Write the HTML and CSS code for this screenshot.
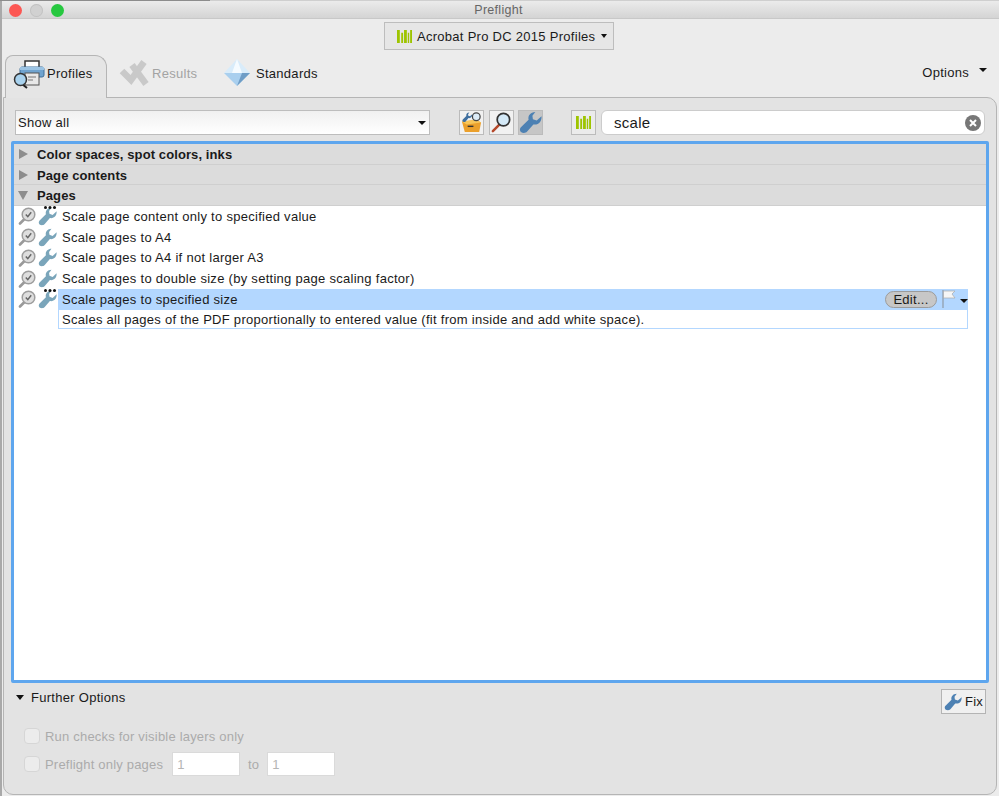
FILE: index.html
```html
<!DOCTYPE html>
<html lang="en">
<head>
<meta charset="utf-8">
<title>Preflight</title>
<link rel="stylesheet" href="styles.css">
</head>
<body>
<svg class="defs" width="0" height="0" aria-hidden="true">
  <defs>
    <symbol id="wrench" viewBox="0 0 24 24">
      <path d="M17 1C12 1 9 5 10 9L2 17C0 19 1 23 5 23C6.500 23 7.500 22.500 8.500 21.500L15 14C20 15 24 11 23.500 5.500L18.500 10L14.500 8.500L14 5Z"/>
    </symbol>
    <symbol id="bars" viewBox="0 0 16 16">
      <path d="M0 1h3v14H0zM4.500 4h2v11h-2zM7.500 1h3v14h-3zM11.500 4h1.500v11h-1.500zM14 1h2v14h-2z" fill="#9ec400"/>
    </symbol>
    <symbol id="lens-check" viewBox="0 0 18 18">
      <path d="M2 16.500l4-4" stroke="#9a9a9a" stroke-width="2.600" stroke-linecap="round"/>
      <circle cx="10.500" cy="7.500" r="6.300" fill="#dedede" stroke="#9d9d9d" stroke-width="1.500"/>
      <path d="M7.800 7.500l2 2.200 3.400-4.400" fill="none" stroke="#666" stroke-width="1.500"/>
    </symbol>
  </defs>
</svg>
<div class="window">
  <header class="titlebar">
    <div class="lights"><i class="light red"></i><i class="light off"></i><i class="light green"></i></div>
    <span class="title">Preflight</span>
  </header>
  <div class="library-row">
    <button class="library"><svg class="bars-small"><use href="#bars"/></svg>Acrobat Pro DC 2015 Profiles<i class="caret lib-caret"></i></button>
  </div>
  <div class="tabs">
    <div class="tab active">
      <svg class="tab-icon printer" viewBox="0 0 32 30">
        <rect x="12" y="2" width="14" height="8" fill="#fff" stroke="#333" stroke-width="1.500"/>
        <rect x="7" y="8" width="24" height="10" rx="2" fill="#6fa3cf" stroke="#3f6f99"/>
        <rect x="7" y="8" width="24" height="3" fill="#9cc4e4"/>
        <rect x="12" y="14" width="14" height="12" fill="#e8e8e8" stroke="#555"/>
        <path d="M15 18h8M15 21h5" stroke="#777"/>
        <path d="M9 25l5 4" stroke="#222" stroke-width="2"/>
        <circle cx="7.500" cy="20.500" r="6" fill="#a8d2ee" stroke="#333" stroke-width="1.500"/>
      </svg>
      <span>Profiles</span>
    </div>
    <div class="tab disabled">
      <svg class="tab-icon results" viewBox="0 0 30 28" fill="none" stroke="#c9c9c9" stroke-width="6.500">
        <path d="M3 12l9 9L25 3"/>
        <path d="M13 6l14 19"/>
      </svg>
      <span>Results</span>
    </div>
    <div class="tab standards">
      <svg class="tab-icon diamond" viewBox="0 0 28 28">
        <path d="M14 0L27 14H1z" fill="#d9ecfa"/>
        <path d="M14 0l-5 14h10z" fill="#f5fbff"/>
        <path d="M1 14h26L14 27z" fill="#a9cfee"/>
        <path d="M19 14h8L14 27z" fill="#6f9dc6"/>
      </svg>
      <span>Standards</span>
    </div>
    <div class="options">Options<i class="caret opt-caret"></i></div>
  </div>
  <main class="panel">
    <div class="toolbar">
      <div class="select">Show all<i class="caret sel-caret"></i></div>
      <div class="icon-group">
        <button class="icon-btn">
          <svg viewBox="0 0 24 24">
            <path d="M2 11l15 -2 5 3-2 10H5z" fill="#eba02c"/>
            <path d="M2 11l15-2 5 3-15 2z" fill="#f7c65a"/>
            <path d="M8 16h6" stroke="#333" stroke-width="1.500"/>
            <use href="#wrench" x="2" y="1" width="11" height="11" fill="#3f6f9f"/>
            <circle cx="17" cy="6" r="4" fill="#dcecf8" stroke="#444" stroke-width="1.300"/>
          </svg>
        </button>
        <button class="icon-btn">
          <svg viewBox="0 0 24 24">
            <path d="M3 21l7-7" stroke="#b5482a" stroke-width="2.600" stroke-linecap="round"/>
            <circle cx="14" cy="9" r="6.500" fill="#d4e9f7" stroke="#333" stroke-width="1.800"/>
          </svg>
        </button>
        <button class="icon-btn pressed"><svg class="blue"><use href="#wrench"/></svg></button>
      </div>
      <button class="icon-btn bars-btn"><svg><use href="#bars"/></svg></button>
      <div class="search">
        <span>scale</span>
        <svg class="clear" viewBox="0 0 16 16">
          <circle cx="8" cy="8" r="8" fill="#777"/>
          <path d="M5 5l6 6M11 5l-6 6" stroke="#fff" stroke-width="2"/>
        </svg>
      </div>
    </div>
    <section class="list">
      <div class="group"><i class="tri right"></i>Color spaces, spot colors, inks</div>
      <div class="group"><i class="tri right"></i>Page contents</div>
      <div class="group"><i class="tri down"></i>Pages</div>
      <div class="row">
        <div class="row-icons"><svg class="lens"><use href="#lens-check"/></svg><span class="wr-wrap dots"><svg class="wr"><use href="#wrench"/></svg></span></div>
        <span class="row-text">Scale page content only to specified value</span>
      </div>
      <div class="row">
        <div class="row-icons"><svg class="lens"><use href="#lens-check"/></svg><span class="wr-wrap"><svg class="wr"><use href="#wrench"/></svg></span></div>
        <span class="row-text">Scale pages to A4</span>
      </div>
      <div class="row">
        <div class="row-icons"><svg class="lens"><use href="#lens-check"/></svg><span class="wr-wrap"><svg class="wr"><use href="#wrench"/></svg></span></div>
        <span class="row-text">Scale pages to A4 if not larger A3</span>
      </div>
      <div class="row">
        <div class="row-icons"><svg class="lens"><use href="#lens-check"/></svg><span class="wr-wrap"><svg class="wr"><use href="#wrench"/></svg></span></div>
        <span class="row-text">Scale pages to double size (by setting page scaling factor)</span>
      </div>
      <div class="row selected-row">
        <div class="row-icons"><svg class="lens"><use href="#lens-check"/></svg><span class="wr-wrap dots"><svg class="wr"><use href="#wrench"/></svg></span></div>
        <div class="selected">
          <span class="row-text">Scale pages to specified size</span>
          <button class="edit">Edit...</button>
          <svg class="flag" viewBox="0 0 14 18">
            <path d="M1 0v18" stroke="#8f9aa6" stroke-width="1.200"/>
            <path d="M1.500 1H13l-3 3 3 4H1.500z" fill="#f6f6f6" stroke="#a9a9a9" stroke-width=".7"/>
          </svg>
          <i class="caret flag-caret"></i>
        </div>
      </div>
      <div class="description">Scales all pages of the PDF proportionally to entered value (fit from inside and add white space).</div>
    </section>
    <div class="further">
      <div class="further-head"><i class="caret big"></i>Further Options</div>
      <button class="fix"><svg class="blue"><use href="#wrench"/></svg>Fix</button>
    </div>
    <div class="check-row first"><i class="checkbox"></i><span>Run checks for visible layers only</span></div>
    <div class="check-row"><i class="checkbox"></i><span>Preflight only pages</span><div class="field one">1</div><span class="to">to</span><div class="field">1</div></div>
  </main>
</div>
</body>
</html>
```
FILE: styles.css
```css
* { box-sizing: border-box; }
html, body { margin: 0; height: 796px; overflow: hidden; }
body { background: #ececec; font-family: "Liberation Sans", Arial, sans-serif; font-size: 13px; color: #1a1a1a; letter-spacing: .28px; }
i { display: block; }
button { font: inherit; letter-spacing: inherit; color: inherit; padding: 0; }
.defs { position: absolute; }

.window { height: 796px; display: flex; flex-direction: column; border-top: 1px solid #cfcfcf; border-left: 2px solid #a9a9a9; }
.titlebar { height: 18px; flex: none; display: flex; align-items: center; justify-content: center; position: relative; padding: 1px 4px 0 0; background: linear-gradient(#ebebeb, #d4d4d4); border-bottom: 1px solid #c8c8c8; }
.titlebar::before { content: ""; position: absolute; left: -2px; top: -1px; width: 210px; height: 1px; background: #8c8c8c; }
.title { color: #666; font-size: 12.500px; }
.lights { position: absolute; left: 7px; top: 3px; display: flex; gap: 8px; }
.light { width: 13px; height: 13px; border-radius: 50%; }
.red { background: #fc5753; }
.off { background: #d1d1d1; box-shadow: inset 0 0 0 1px #c2c2c2; }
.green { background: #27c840; }

.library-row { height: 36px; flex: none; padding-top: 3px; display: flex; justify-content: center; padding-right: 3px; }
.library { width: 230px; height: 28px; border: 1px solid #bdbdbd; background: #e6e6e6; display: flex; align-items: center; padding-left: 12px; font-size: 13px; color: #1a1a1a; }
.bars-small { width: 15px; height: 15px; margin-right: 5px; flex: none; }
.caret { width: 0; height: 0; border-left: 3.500px solid transparent; border-right: 3.500px solid transparent; border-top: 4px solid #111; }
.lib-caret { margin-left: 6px; }

.tabs { display: flex; height: 42px; flex: none; position: relative; z-index: 1; padding-left: 3px; }
.tab { display: flex; align-items: center; height: 43px; padding-bottom: 7px; }
.tab.active { width: 102px; border: 1px solid #b5b5b5; border-bottom: 0; border-radius: 8px 12px 0 0; background: #e5e5e5; padding-left: 7px; }
.tab.active span { margin-left: 2px; }
.printer { width: 32px; height: 30px; }
.tab-icon { flex: none; }
.tab.disabled { color: #a3a3a3; margin-left: 12px; width: 102px; }
.results { width: 30px; height: 28px; margin-right: 3px; }
.tab.standards { margin-left: 2px; }
.diamond { width: 28px; height: 28px; margin-right: 5px; }
.options { margin-left: auto; display: flex; align-items: flex-start; padding: 10px 12px 0 0; }
.opt-caret { margin: 3px 0 0 10px; border-left-width: 4px; border-right-width: 4px; }

.panel { flex: 1; margin: 0 2px 1px 1px; background: #e3e3e3; border: 1px solid #b5b5b5; border-radius: 0 10px 10px 10px; padding: 12px 7px 0 11px; display: flex; flex-direction: column; }

.toolbar { display: flex; height: 25px; flex: none; margin-right: 4px; }
.select { width: 415px; height: 25px; display: flex; align-items: center; justify-content: space-between; padding: 0 3px 0 2px; background: linear-gradient(#f0f0f0, #fff); border: 1px solid #bdbdbd; }
.sel-caret { border-left-width: 4px; border-right-width: 4px; }
.icon-group { display: flex; gap: 4.500px; margin-left: 29px; }
.icon-btn { width: 25px; height: 25px; border: 1px solid #bbb; background: #f1f1f1; display: flex; align-items: center; justify-content: center; }
.icon-btn svg { width: 23px; height: 23px; }
.icon-btn.pressed { background: #c6c6c6; }
.blue { fill: #4d81b3; }
.bars-btn { margin-left: 28px; background: #ebebeb; }
.bars-btn svg { width: 15px; height: 15px; }
.search { flex: 1; margin-left: 5px; height: 25px; background: #fff; border: 1px solid #ccc; border-radius: 6px; display: flex; align-items: center; justify-content: space-between; padding: 0 3px 0 12px; font-size: 15px; }
.clear { width: 16px; height: 16px; }

.list { height: 542px; flex: none; margin: 6px 0 0 -4px; border: 3px solid #5ea6ee; border-radius: 2px; background: #fff; }
.group { height: 20.700px; background: #dcdcdc; border-bottom: 1px solid #cfcfcf; display: flex; align-items: center; font-weight: 700; padding: 1px 0 0 4px; letter-spacing: .1px; }
.tri { width: 0; height: 0; margin-right: 9px; }
.tri.right { margin-left: 1px; border-top: 5.500px solid transparent; border-bottom: 5.500px solid transparent; border-left: 9px solid #8d8d8d; }
.tri.down { border-left: 5.500px solid transparent; border-right: 5.500px solid transparent; border-top: 9px solid #8d8d8d; margin-right: 9px; }
.row { height: 20.750px; display: flex; align-items: center; }
.row-icons { width: 44px; flex: none; display: flex; align-items: center; padding-left: 4px; height: 20px; }
.row > .row-text { margin-left: 4px; }
.lens { width: 18px; height: 18px; flex: none; }
.wr-wrap { position: relative; margin-left: 2px; display: flex; }
.wr { width: 19px; height: 19px; fill: #7aa5ba; }
.dots::after { content: ""; position: absolute; left: 6px; top: -1px; width: 3px; height: 3px; border-radius: 50%; background: #111; box-shadow: 4.500px 0 #111, 9px 0 #111; }
.row-text { white-space: nowrap; }
.selected { flex: none; width: 910px; height: 21px; background: #b3d7ff; display: flex; align-items: center; padding-left: 4px; }
.selected .row-text { flex: 1; }
.edit { width: 52px; height: 17px; border: 1px solid #9b9b9b; border-radius: 9px; background: #c7c7c7; display: flex; align-items: center; justify-content: center; }
.flag { width: 14px; height: 18px; margin-left: 5px; align-self: flex-start; margin-top: 1px; }
.flag-caret { margin: 3px 0 0 4px; border-left-width: 4px; border-right-width: 4px; }
.description { margin-left: 44px; width: 910px; height: 19px; padding: 2px 0 0 3px; border: 1px solid #b3d7ff; border-top: 0; display: flex; align-items: center; white-space: nowrap; }

.further { display: flex; justify-content: space-between; height: 33px; flex: none; margin-top: 6px; margin-left: -1px; }
.further-head { display: flex; align-items: center; height: 16px; }
.caret.big { border-left-width: 4.500px; border-right-width: 4.500px; border-top-width: 5px; margin-right: 7px; margin-left: 2px; }
.fix { width: 45px; height: 25px; margin-right: 3px; border: 1px solid #b4b4b4; background: #f0f0f0; display: flex; align-items: center; justify-content: center; gap: 3px; }
.fix svg { width: 18px; height: 18px; }
.check-row { display: flex; align-items: center; height: 24px; margin: 4px 0 0 9px; color: #ababab; letter-spacing: .2px; }
.check-row.first { margin-top: 2px; }
.checkbox { width: 16px; height: 16px; border: 1px solid #d6d6d6; border-radius: 4px; background: #ececec; margin-right: 5px; }
.field { width: 68px; height: 24px; background: #fff; border: 1px solid #dadada; padding-left: 4px; display: flex; align-items: center; color: #b5b5b5; }
.field.one { margin-left: 9px; }
.to { width: 27px; text-align: center; }
```
